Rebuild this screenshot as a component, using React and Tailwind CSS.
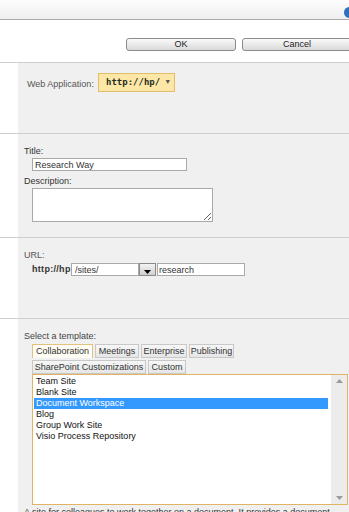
import { useState } from 'react';

const templates = ['Team Site', 'Blank Site', 'Document Workspace', 'Blog', 'Group Work Site', 'Visio Process Repository'];

function Tab({ label, active, w }) {
  return (
    <div
      className={
        'h-[14px] flex items-center justify-center whitespace-nowrap border text-[9px] leading-none text-[#333] ' +
        (active
          ? 'bg-[#fffdf3] border-[#e2c27e] border-b-0'
          : 'bg-gradient-to-b from-[#f7f7f7] to-[#e6e6e6] border-[#c8c8c8]')
      }
      style={{ width: w }}
    >
      {label}
    </div>
  );
}

export default function App() {
  const [selected, setSelected] = useState(2);

  return (
    <div className="w-[349px] h-[512px] overflow-hidden bg-white font-['Liberation_Sans',Arial,sans-serif] text-[9px] text-[#333]">
      {/* title bar */}
      <div className="h-[20px] border-b border-[#aaaaaa] bg-gradient-to-b from-[#fdfdfd] to-[#efefef] flex items-center justify-end">
        <div className="w-[11px] h-[11px] rounded-full bg-[#2f6fc0] mr-[-6px] mt-[5px]" />
      </div>

      {/* buttons */}
      <div className="h-[42px] pl-[126px] pt-[18px] flex gap-[6px]">
        <button className="w-[110px] h-[13px] shrink-0 rounded-[3px] border border-[#8c8c8c] bg-gradient-to-b from-[#fafafa] to-[#dadada] text-[9px] leading-none text-[#222]">
          OK
        </button>
        <button className="w-[110px] h-[13px] shrink-0 rounded-[3px] border border-[#8c8c8c] bg-gradient-to-b from-[#fafafa] to-[#dadada] text-[9px] leading-none text-[#222]">
          Cancel
        </button>
      </div>

      {/* web application */}
      <div className="h-[71px] border-t border-[#cfcfcf] flex">
        <div className="w-[18px] shrink-0" />
        <div className="flex-1 bg-[#f0f0f0] pl-[9px] pt-[10px] flex items-start">
          <span className="mt-[5px] w-[71px] whitespace-nowrap text-[#555]">Web Application:</span>
          <div className="w-[77px] h-[19px] border border-[#e2bd6d] bg-[#fde7a6] flex items-center pl-[7px] gap-[4px]">
            <span className="font-['DejaVu_Sans_Mono',monospace] font-bold text-[9px] text-[#1f2d1f]">http://hp/</span>
            <span className="text-[7px] text-[#555]">▼</span>
          </div>
        </div>
      </div>

      {/* title & description */}
      <div className="h-[104px] border-t border-[#cfcfcf] flex">
        <div className="w-[18px] shrink-0" />
        <div className="flex-1 bg-[#f0f0f0] pl-[6px] pt-[11px] flex flex-col">
          <span className="leading-[12px]">Title:</span>
          <input
            className="ml-[8px] mt-[1px] w-[155px] h-[13px] border border-[#a9a9a9] bg-white px-[2px] text-[9px] leading-none outline-none"
            defaultValue="Research Way"
          />
          <span className="mt-[4px] leading-[12px]">Description:</span>
          <textarea className="ml-[8px] mt-[1px] w-[181px] h-[34px] border border-[#a9a9a9] bg-white outline-none resize" />
        </div>
      </div>

      {/* url */}
      <div className="h-[81px] border-t border-[#cfcfcf] flex">
        <div className="w-[18px] shrink-0" />
        <div className="flex-1 bg-[#f0f0f0] pl-[6px] pt-[11px] flex flex-col">
          <span className="leading-[12px] text-[#555]">URL:</span>
          <div className="ml-[8px] mt-[2px] flex items-center">
            <span className="w-[39px] font-bold text-[9px] tracking-[0.3px] text-[#333] whitespace-nowrap">http://hp</span>
            <input
              className="w-[68px] h-[13px] border border-[#a9a9a9] bg-white px-[3px] text-[9px] leading-none outline-none"
              defaultValue="/sites/"
            />
            <div className="w-[17px] h-[13px] border border-[#8a8a8a] bg-gradient-to-b from-[#f4f4f4] to-[#cfcfcf] flex items-end justify-center">
              <svg width="7" height="4" viewBox="0 0 7 4" className="mb-[1px]">
                <path d="M0 0h7L3.5 4z" fill="#000" />
              </svg>
            </div>
            <input
              className="ml-[1px] w-[88px] h-[13px] border border-[#a9a9a9] bg-white px-[1px] text-[9px] leading-none outline-none"
              defaultValue="research"
            />
          </div>
        </div>
      </div>

      {/* template */}
      <div className="h-[200px] border-t border-[#cfcfcf] flex">
        <div className="w-[18px] shrink-0" />
        <div className="flex-1 bg-[#f0f0f0] pl-[6px] pt-[11px] flex flex-col">
          <span className="leading-[12px] text-[#444]">Select a template:</span>
          <div className="ml-[8px] mt-[2px] flex gap-[2px]">
            <Tab label="Collaboration" active w={61} />
            <Tab label="Meetings" w={44} />
            <Tab label="Enterprise" w={46} />
            <Tab label="Publishing" w={45} />
          </div>
          <div className="ml-[8px] mt-[2px] flex gap-[2px]">
            <Tab label="SharePoint Customizations" w={114} />
            <Tab label="Custom" w={38} />
          </div>
          <div className="ml-[8px] w-[316px] h-[133px] border border-[#e0b462] bg-white flex">
            <div className="flex-1 pt-[1px] pl-[1px]">
              {templates.map((t, i) => (
                <div
                  key={t}
                  onClick={() => setSelected(i)}
                  className={
                    'h-[11px] leading-[11px] pl-[2px] text-[9px] ' +
                    (i === selected ? 'bg-[#3399ff] text-white' : 'text-[#111]')
                  }
                >
                  {t}
                </div>
              ))}
            </div>
            <div className="w-[16px] ml-[3px] bg-[#ececec] flex flex-col justify-between items-center py-[4px]">
              <svg width="7" height="4" viewBox="0 0 7 4">
                <path d="M0 4L3.5 0L7 4z" fill="#9a9a9a" />
              </svg>
              <svg width="7" height="4" viewBox="0 0 7 4">
                <path d="M0 0h7L3.5 4z" fill="#9a9a9a" />
              </svg>
            </div>
          </div>
          <p className="mt-[1px] leading-[12px] text-[#333] whitespace-nowrap">
            A site for colleagues to work together on a document. It provides a document
          </p>
        </div>
      </div>
    </div>
  );
}
